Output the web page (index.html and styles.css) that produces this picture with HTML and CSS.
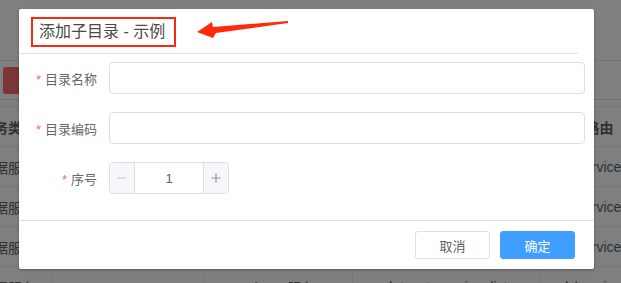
FILE: index.html
```html
<!DOCTYPE html>
<html lang="zh-CN">

<head>
    <meta charset="UTF-8">
    <meta name="viewport" content="width=device-width, initial-scale=1.0">
    <title>添加子目录</title>
    <link rel="stylesheet" href="styles.css">
</head>

<body>
    <div class="page">
        <div class="topbar"></div>
        <div class="toolbar">
            <button class="btn-danger">删除</button>
        </div>
        <table class="grid">
            <colgroup>
                <col style="width: 82px">
                <col style="width: 151px">
                <col style="width: 149px">
                <col style="width: 188px">
                <col style="width: 160px">
            </colgroup>
            <thead>
                <tr>
                    <th>服务类型</th>
                    <th>服务名称</th>
                    <th class="center">服务编码</th>
                    <th>服务地址</th>
                    <th class="route">服务路由</th>
                </tr>
            </thead>
            <tbody>
                <tr>
                    <td>数据服务</td>
                    <td>目录查询</td>
                    <td class="center">sub-0-1服务</td>
                    <td>/dataset/list</td>
                    <td>aml.service.list</td>
                </tr>
                <tr>
                    <td>数据服务</td>
                    <td>目录详情</td>
                    <td class="center">sub-0-2服务</td>
                    <td>/dataset/info</td>
                    <td>aml.service.info</td>
                </tr>
                <tr>
                    <td>数据服务</td>
                    <td>目录编辑</td>
                    <td class="center">sub-0-3服务</td>
                    <td>/dataset/edit</td>
                    <td>aml.service.edit</td>
                </tr>
                <tr>
                    <td>数据服务</td>
                    <td></td>
                    <td class="center">sub-0-0服务</td>
                    <td class="center">dataset_service_list</td>
                    <td>sub/service/list</td>
                </tr>
            </tbody>
        </table>
    </div>

    <div class="mask"></div>

    <div class="dialog">
        <div class="dialog-header">
            <span class="dialog-title">添加子目录 - 示例</span>
            <svg class="arrow" width="96" height="22" viewBox="0 0 96 22">
                <polygon points="2,13 17,3 18,8 93,2 93,4 21,14 18,19" fill="#ff2a0a" />
            </svg>
        </div>

        <form class="dialog-body">
            <div class="form-item">
                <label class="form-label">目录名称</label>
                <input class="form-input" type="text">
            </div>
            <div class="form-item">
                <label class="form-label">目录编码</label>
                <input class="form-input" type="text">
            </div>
            <div class="form-item">
                <label class="form-label">序号</label>
                <div class="number-input">
                    <span class="num-btn is-disabled">
                        <svg width="10" height="10" viewBox="0 0 10 10">
                            <path d="M0.5 5h9" stroke="currentColor" stroke-width="1.2" />
                        </svg>
                    </span>
                    <input class="num-value" type="text" value="1">
                    <span class="num-btn">
                        <svg width="10" height="10" viewBox="0 0 10 10">
                            <path d="M0.5 5h9M5 0.5v9" stroke="currentColor" stroke-width="1.2" />
                        </svg>
                    </span>
                </div>
            </div>
        </form>

        <div class="dialog-footer">
            <button class="btn">取消</button>
            <button class="btn btn-primary">确定</button>
        </div>
    </div>
</body>

</html>
```

FILE: styles.css
```css
html,
body {
    margin: 0;
    height: 100%;
}

body {
    width: 621px;
    height: 283px;
    overflow: hidden;
    position: relative;
    font-family: "Liberation Sans", "Noto Sans CJK SC", sans-serif;
    color: #606266;
    background-color: #fff;
}

/* 背景页面 */
.page {
    width: 100%;
}

.topbar {
    height: 60px;
    border-bottom: 1px solid #e4e7ed;
}

.toolbar {
    height: 39px;
    padding: 6px 0 0 3px;
    box-sizing: border-box;
    border-bottom: 1px solid #dcdfe6;
}

.btn-danger {
    width: 60px;
    height: 27px;
    border: none;
    border-radius: 3px;
    background-color: #f56c6c;
    color: #fff;
    font-size: 12px;
    font-family: inherit;
}

.grid {
    margin: 6px 0 0 -30px;
    width: 730px;
    table-layout: fixed;
    border-collapse: collapse;
    font-size: 14px;
    border-top: 1px solid #ebeef5;
}

.grid th,
.grid td {
    height: 39px;
    padding: 0 10px;
    text-align: left;
    white-space: nowrap;
    overflow: hidden;
    border-bottom: 1px solid #ebeef5;
    border-right: 1px solid #ebeef5;
}

.grid th {
    color: #606266;
    font-weight: bold;
}

.grid .center {
    text-align: center;
}

.grid .route {
    padding-left: 17px;
}

/* 遮罩 */
.mask {
    position: absolute;
    inset: 0;
    background-color: rgba(0, 0, 0, 0.5);
}

/* 弹窗 */
.dialog {
    position: absolute;
    left: 19px;
    top: 9px;
    width: 575px;
    background-color: #fff;
    border-radius: 2px;
    box-shadow: 0 1px 3px rgba(0, 0, 0, 0.3);
}

.dialog-header {
    position: relative;
    height: 45px;
    box-sizing: border-box;
    margin-right: 16px;
    padding: 8px 0 0 12px;
    border-bottom: 1px solid #dcdfe6;
}

.dialog-title {
    display: inline-block;
    padding: 0 9px 0 6px;
    border: 2px solid #f52a12;
    line-height: 26px;
    font-size: 16px;
    color: #4a4a4a;
}

.arrow {
    position: absolute;
    left: 176px;
    top: 10px;
}

.dialog-body {
    display: flex;
    flex-direction: column;
    gap: 18px;
    margin: 0;
    padding: 8px 9px 26px 0;
}

.form-item {
    display: flex;
    align-items: center;
    height: 32px;
}

.form-label {
    width: 90px;
    padding-right: 12px;
    box-sizing: border-box;
    text-align: right;
    font-size: 13px;
    color: #66686d;
}

.form-label::before {
    content: "*";
    margin-right: 4px;
    color: #f56c6c;
}

.form-input {
    flex: 1;
    height: 32px;
    box-sizing: border-box;
    border: 1px solid #dcdfe6;
    border-radius: 4px;
    padding: 0 15px;
    outline: none;
    font-family: inherit;
}

.number-input {
    display: flex;
    width: 120px;
    height: 32px;
    box-sizing: border-box;
    border: 1px solid #dcdfe6;
    border-radius: 4px;
    overflow: hidden;
}

.num-btn {
    display: flex;
    justify-content: center;
    align-items: center;
    width: 24px;
    background-color: #f5f7fa;
    color: #909399;
}

.num-btn:first-child {
    border-right: 1px solid #dcdfe6;
}

.num-btn:last-child {
    border-left: 1px solid #dcdfe6;
}

.num-btn.is-disabled {
    color: #c0c4cc;
}

.num-value {
    flex: 1;
    min-width: 0;
    border: none;
    outline: none;
    padding: 0;
    text-align: center;
    font-size: 13px;
    font-family: inherit;
    color: #606266;
}

.dialog-footer {
    display: flex;
    justify-content: flex-end;
    gap: 10px;
    padding: 10px 19px 10px 0;
    border-top: 1px solid #dcdfe6;
}

.btn {
    width: 75px;
    height: 28px;
    border: 1px solid #dcdfe6;
    border-radius: 3px;
    background-color: #fff;
    color: #606266;
    font-size: 13px;
    font-family: inherit;
    outline: none;
}

.btn-primary {
    border-color: #409eff;
    background-color: #409eff;
    color: #fff;
}
```
